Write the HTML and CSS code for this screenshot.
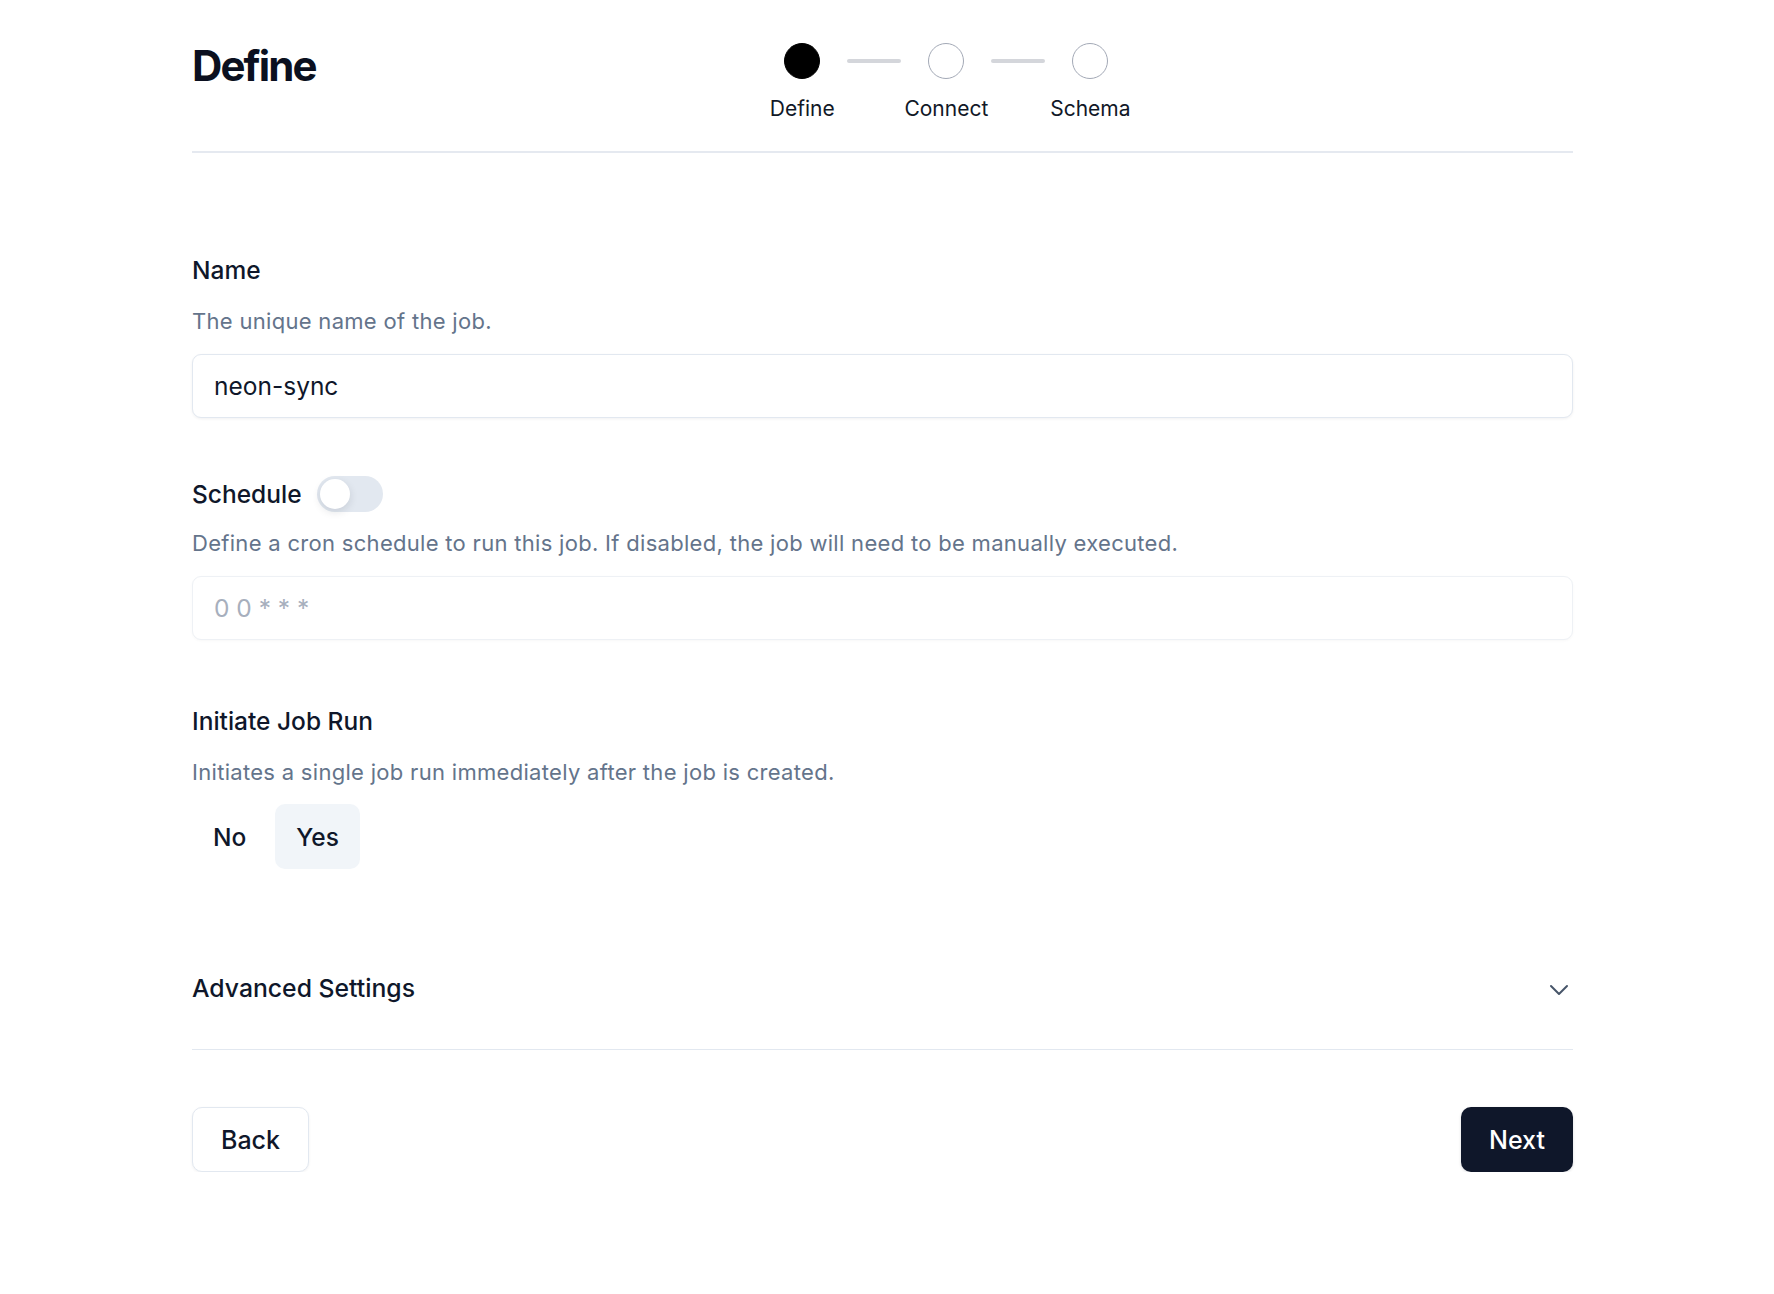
FILE: index.html
```html
<!DOCTYPE html>
<html lang="en">
<head>
<meta charset="utf-8">
<title>New Job – Define</title>
<link rel="stylesheet" href="styles.css">
</head>
<body>
<div class="page">
  <header class="header">
    <h1 class="title">Define</h1>
    <div class="stepper-wrap">
      <ol class="stepper">
        <li class="step">
          <span class="dot dot-active"></span>
          <span class="step-label">Define</span>
        </li>
        <li class="connector"><span class="bar"></span></li>
        <li class="step">
          <span class="dot"></span>
          <span class="step-label">Connect</span>
        </li>
        <li class="connector"><span class="bar"></span></li>
        <li class="step">
          <span class="dot"></span>
          <span class="step-label">Schema</span>
        </li>
      </ol>
    </div>
  </header>

  <form class="form">
    <section class="field field-name">
      <label class="field-label" for="job-name">Name</label>
      <p class="desc">The unique name of the job.</p>
      <input class="input" id="job-name" type="text" value="neon-sync">
    </section>

    <section class="field field-schedule">
      <div class="label-row">
        <label class="field-label" for="cron">Schedule</label>
        <button type="button" class="switch" role="switch" aria-checked="false"><span class="thumb"></span></button>
      </div>
      <p class="desc desc-after-row">Define a cron schedule to run this job. If disabled, the job will need to be manually executed.</p>
      <input class="input input-disabled" id="cron" type="text" placeholder="0 0 * * *" disabled>
    </section>

    <section class="field field-initiate">
      <span class="field-label">Initiate Job Run</span>
      <p class="desc desc-initiate">Initiates a single job run immediately after the job is created.</p>
      <div class="toggle-group">
        <button type="button" class="toggle">No</button>
        <button type="button" class="toggle toggle-on">Yes</button>
      </div>
    </section>

    <div class="accordion">
      <button type="button" class="accordion-trigger">
        <span>Advanced Settings</span>
        <svg class="chevron" viewBox="0 0 24 24" width="32" height="32" fill="none" stroke="currentColor" stroke-width="1.5" stroke-linecap="round" stroke-linejoin="round"><path d="m6 9 6 6 6-6"/></svg>
      </button>
    </div>

    <div class="actions">
      <button type="button" class="btn btn-outline">Back</button>
      <button type="submit" class="btn btn-primary">Next</button>
    </div>
  </form>
</div>
</body>
</html>
```

FILE: styles.css
```css
* {
  box-sizing: border-box;
}

html, body {
  margin: 0;
  background: #ffffff;
}

body {
  font-family: Inter, "Noto Sans", sans-serif;
  color: #0f172a;
}

.page {
  margin-left: 192px;
  width: 1381px;
}

/* ---------- header with step indicator ---------- */
.header {
  display: flex;
  align-items: flex-start;
  padding-top: 39px;
  padding-bottom: 27px;
  border-bottom: 2px solid #e5e9f0;
}

.title {
  margin: 0;
  font-size: 42px;
  line-height: 54px;
  font-weight: 700;
  letter-spacing: -0.045em;
  color: #0b1020;
}

.stepper-wrap {
  flex: 1;
  display: flex;
  justify-content: center;
  padding-top: 4px;
}

.stepper {
  list-style: none;
  margin: 0 0 0 4px;
  padding: 0;
  display: flex;
  align-items: flex-start;
}

.step {
  width: 36px;
  display: flex;
  flex-direction: column;
  align-items: center;
}

.dot {
  width: 36px;
  height: 36px;
  border-radius: 50%;
  border: 1.5px solid #a3a9b6;
  background: #ffffff;
}

.dot-active {
  background: #000000;
  border-color: #000000;
}

.step-label {
  margin-top: 15px;
  font-size: 21px;
  line-height: 30px;
  white-space: nowrap;
  color: #111827;
}

.connector {
  width: 108px;
  height: 36px;
  display: flex;
  align-items: center;
  justify-content: center;
}

.bar {
  width: 54px;
  height: 4px;
  border-radius: 2px;
  background: #d4d6db;
}

/* ---------- form ---------- */
.form {
  padding-top: 105px;
}

.field-label {
  display: block;
  font-size: 24.5px;
  line-height: 24px;
  font-weight: 500;
  color: #0f172a;
}

.desc {
  margin: 24px 0 0;
  font-size: 22px;
  line-height: 30px;
  letter-spacing: 0.3px;
  color: #64748b;
}

.desc-after-row {
  margin-top: 16px;
}

.desc-initiate {
  margin-top: 24px;
}

.input {
  display: block;
  width: 100%;
  height: 64px;
  margin-top: 18px;
  padding: 0 21px;
  font-family: inherit;
  font-size: 24.5px;
  color: #0f172a;
  background: #ffffff;
  border: 1.5px solid #e2e8f0;
  border-radius: 9px;
  box-shadow: 0 1px 3px rgba(15, 23, 42, 0.06);
  outline: none;
}

.input-disabled {
  border-color: #eef1f5;
  box-shadow: 0 1px 3px rgba(15, 23, 42, 0.03);
}

.input-disabled::placeholder {
  color: #a7afbd;
}

.field-schedule {
  margin-top: 58px;
}

.label-row {
  display: flex;
  align-items: center;
  gap: 15px;
  height: 36px;
}

.switch {
  position: relative;
  width: 66px;
  height: 36px;
  padding: 0;
  border: none;
  border-radius: 18px;
  background: #e2e8f0;
  cursor: pointer;
}

.thumb {
  position: absolute;
  top: 3px;
  left: 3px;
  width: 30px;
  height: 30px;
  border-radius: 50%;
  background: #ffffff;
  box-shadow: 0 3px 8px rgba(15, 23, 42, 0.12);
}

.field-initiate {
  margin-top: 69px;
}

.toggle-group {
  display: flex;
  gap: 8px;
  margin-top: 17px;
}

.toggle {
  height: 65px;
  padding: 0 21px;
  font-family: inherit;
  font-size: 24.5px;
  font-weight: 500;
  color: #0f172a;
  background: transparent;
  border: none;
  border-radius: 10px;
}

.toggle-on {
  background: #f1f5f9;
}

/* ---------- advanced settings ---------- */
.accordion {
  margin-top: 77px;
  border-bottom: 1.5px solid #e2e8f0;
}

.accordion-trigger {
  width: 100%;
  display: flex;
  align-items: center;
  justify-content: space-between;
  padding: 24px 0 43px;
  font-family: inherit;
  font-size: 24.75px;
  line-height: 36px;
  font-weight: 500;
  color: #0f172a;
  background: transparent;
  border: none;
  text-align: left;
}

.chevron {
  color: #475569;
  margin-right: -2px;
  margin-top: 3px;
}

/* ---------- footer buttons ---------- */
.actions {
  display: flex;
  justify-content: space-between;
  margin-top: 57px;
}

.btn {
  height: 65px;
  padding: 0 28px;
  font-family: inherit;
  font-size: 25px;
  font-weight: 500;
  border-radius: 10px;
}

.btn-outline {
  color: #0f172a;
  background: #ffffff;
  border: 1.5px solid #e2e8f0;
  box-shadow: 0 1px 3px rgba(15, 23, 42, 0.06);
}

.btn-primary {
  color: #ffffff;
  background: #0f172a;
  border: none;
  box-shadow: 0 1px 3px rgba(15, 23, 42, 0.15);
}
```
